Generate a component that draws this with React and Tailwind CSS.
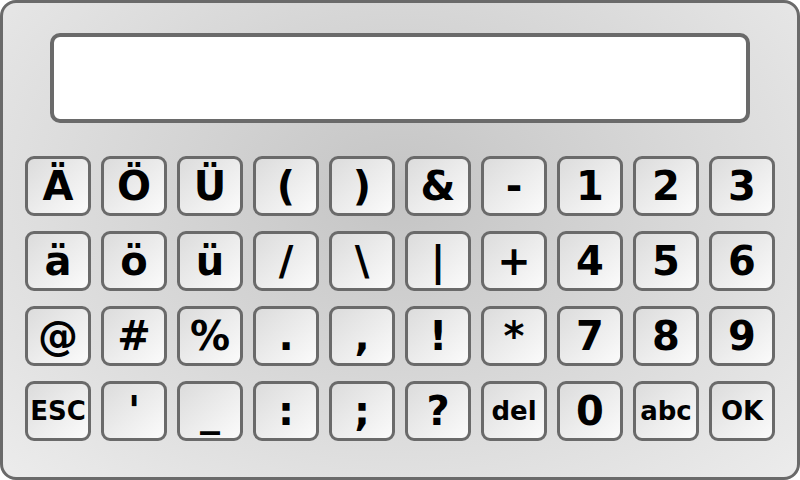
const rows = [
  ['Ä', 'Ö', 'Ü', '(', ')', '&', '-', '1', '2', '3'],
  ['ä', 'ö', 'ü', '/', '\\', '|', '+', '4', '5', '6'],
  ['@', '#', '%', '.', ',', '!', '*', '7', '8', '9'],
  ['ESC', "'", '_', ':', ';', '?', 'del', '0', 'abc', 'OK'],
];

function Key({ label }) {
  // word keys use the smaller size
  const small = label.length > 1;
  return (
    <button
      className={`flex h-[60px] w-[66px] items-center justify-center rounded-[9px] border-[3px] border-[#6a6a6a] bg-linear-to-br from-[#dcdcdc] to-[#fbfbfb] font-bold leading-none text-black ${small ? 'text-[26px]' : 'text-[40px]'}`}
    >
      <span className="leading-normal">{label}</span>
    </button>
  );
}

export default function App() {
  return (
    <div
      className="flex h-[480px] w-[800px] flex-col items-center rounded-[16px] border-[3px] border-[#6a6a6a] bg-[radial-gradient(ellipse_at_50%_40%,#c4c4c4_0%,#d6d6d6_45%,#ececec_100%)]"
      style={{ fontFamily: '"DejaVu Sans", sans-serif' }}
    >
      {/* Display */}
      <div className="mt-[30px] h-[90px] w-[700px] shrink-0 rounded-[10px] border-[4px] border-[#6a6a6a] bg-white" />

      {/* Keypad */}
      <div className="mt-[33px] flex flex-col gap-[15px]">
        {rows.map((row, i) => (
          <div key={i} className="flex gap-[10px]">
            {row.map((k) => (
              <Key key={k} label={k} />
            ))}
          </div>
        ))}
      </div>
    </div>
  );
}
